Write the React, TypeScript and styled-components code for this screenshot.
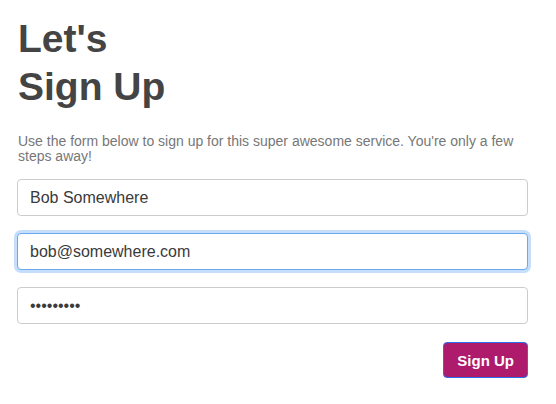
import styled, { createGlobalStyle, css } from "styled-components"

const GlobalStyle = createGlobalStyle`
  html, body {
    margin: 0;
    padding: 0;
    background: #fff;
  }
  body {
    font-family: "Liberation Sans", Arial, Helvetica, sans-serif;
    color: #444;
  }
`

const Page = styled.div`
  width: 511px;
  padding: 15px 0 0 17px;
`

const Heading = styled.h1`
  margin: 0 0 0 1px;
  font-size: 39px;
  line-height: 48px;
  font-weight: 700;
  color: #444;
`

const Intro = styled.p`
  margin: 23px 0 15px 1px;
  font-size: 14px;
  line-height: 15px;
  color: #777;
`

const Form = styled.form`
  display: flex;
  flex-direction: column;
  gap: 17px;
`

const Field = styled.input<{ $focused?: boolean }>`
  box-sizing: border-box;
  width: 100%;
  height: 37px;
  margin: 0;
  padding: 0 12px;
  font-family: "Liberation Sans", Arial, sans-serif;
  font-size: 16px;
  color: #3a3a3a;
  background: #fff;
  border: 1px solid #ccc;
  border-radius: 4px;
  outline: none;

  ${({ $focused }) =>
    $focused &&
    css`
      border-color: #6aa8f2;
      box-shadow: 0 0 0 3px rgba(140, 190, 250, 0.5);
    `}
`

const Actions = styled.div`
  display: flex;
  justify-content: flex-end;
  padding-top: 1px;
`

const SubmitButton = styled.button`
  box-sizing: border-box;
  height: 36px;
  padding: 0 13px;
  font-family: "Liberation Sans", Arial, sans-serif;
  font-size: 15px;
  font-weight: 700;
  color: #fff;
  background: #ae1b6c;
  border: 1px solid #2a6fe8;
  border-radius: 4px;
  cursor: pointer;
`

export default function App() {
  return (
    <Page>
      <GlobalStyle />
      <Heading>
        Let's
        <br />
        Sign Up
      </Heading>
      <Intro>
        Use the form below to sign up for this super awesome service. You're
        only a few steps away!
      </Intro>
      <Form onSubmit={(e) => e.preventDefault()}>
        <Field type="text" defaultValue="Bob Somewhere" />
        <Field type="email" defaultValue="bob@somewhere.com" $focused />
        <Field type="password" defaultValue="123456789" />
        <Actions>
          <SubmitButton type="submit">Sign Up</SubmitButton>
        </Actions>
      </Form>
    </Page>
  )
}
